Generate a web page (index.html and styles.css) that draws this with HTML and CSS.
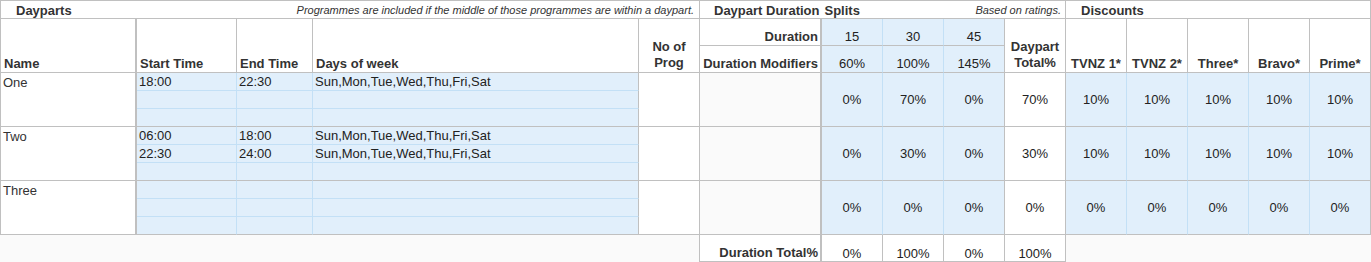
FILE: index.html
```html
<!DOCTYPE html>
<html>
<head>
<meta charset="utf-8">
<link rel="stylesheet" href="styles.css">
</head>
<body>
<div class="sheet">
  <!-- title row -->
  <div class="c top first title t-dp"><span class="ttl">Dayparts</span><span class="note">Programmes are included if the middle of those programmes are within a daypart.</span></div>
  <div class="c top title t-dur"><span class="ttl">Daypart Duration<span class="gap">Splits</span></span><span class="note">Based on ratings.</span></div>
  <div class="c top title t-disc"><span class="ttl">Discounts</span></div>

  <!-- header rows -->
  <div class="c first thick hd r2">Name</div>
  <div class="c hd r2">Start Time</div>
  <div class="c hd r2">End Time</div>
  <div class="c hd r2">Days of week</div>
  <div class="c hd r2 mid two">No of<br>Prog</div>
  <div class="c hd right thick">Duration</div>
  <div class="c blue br-lb mid hv">15</div>
  <div class="c blue br-lb mid hv">30</div>
  <div class="c blue mid hv">45</div>
  <div class="c hd r2 mid two">Daypart<br>Total%</div>
  <div class="c hd r2 mid">TVNZ 1*</div>
  <div class="c hd r2 mid">TVNZ 2*</div>
  <div class="c hd r2 mid">Three*</div>
  <div class="c hd r2 mid">Bravo*</div>
  <div class="c hd r2 mid">Prime*</div>
  <div class="c hd right thick">Duration Modifiers</div>
  <div class="c blue br-lb mid hv">60%</div>
  <div class="c blue br-lb mid hv">100%</div>
  <div class="c blue mid hv">145%</div>

  <!-- daypart One -->
  <div class="c first thick r3 name">One</div>
  <div class="c blue br-lb bb-lb tx">18:00</div>
  <div class="c blue br-lb bb-lb tx">22:30</div>
  <div class="c blue bb-lb tx">Sun,Mon,Tue,Wed,Thu,Fri,Sat</div>
  <div class="c r3"></div>
  <div class="c r3 thick grey"></div>
  <div class="c r3 blue br-lb val">0%</div>
  <div class="c r3 blue br-lb val">70%</div>
  <div class="c r3 blue val">0%</div>
  <div class="c r3 val">70%</div>
  <div class="c r3 blue br-lb val">10%</div>
  <div class="c r3 blue br-lb val">10%</div>
  <div class="c r3 blue br-lb val">10%</div>
  <div class="c r3 blue br-lb val">10%</div>
  <div class="c r3 blue val">10%</div>
  <div class="c blue br-lb bb-lb tx"></div>
  <div class="c blue br-lb bb-lb tx"></div>
  <div class="c blue bb-lb tx"></div>
  <div class="c blue br-lb tx"></div>
  <div class="c blue br-lb tx"></div>
  <div class="c blue tx"></div>

  <!-- daypart Two -->
  <div class="c first thick r3 name">Two</div>
  <div class="c blue br-lb bb-lb tx">06:00</div>
  <div class="c blue br-lb bb-lb tx">18:00</div>
  <div class="c blue bb-lb tx">Sun,Mon,Tue,Wed,Thu,Fri,Sat</div>
  <div class="c r3"></div>
  <div class="c r3 thick grey"></div>
  <div class="c r3 blue br-lb val">0%</div>
  <div class="c r3 blue br-lb val">30%</div>
  <div class="c r3 blue val">0%</div>
  <div class="c r3 val">30%</div>
  <div class="c r3 blue br-lb val">10%</div>
  <div class="c r3 blue br-lb val">10%</div>
  <div class="c r3 blue br-lb val">10%</div>
  <div class="c r3 blue br-lb val">10%</div>
  <div class="c r3 blue val">10%</div>
  <div class="c blue br-lb bb-lb tx">22:30</div>
  <div class="c blue br-lb bb-lb tx">24:00</div>
  <div class="c blue bb-lb tx">Sun,Mon,Tue,Wed,Thu,Fri,Sat</div>
  <div class="c blue br-lb tx"></div>
  <div class="c blue br-lb tx"></div>
  <div class="c blue tx"></div>

  <!-- daypart Three -->
  <div class="c first thick r3 name">Three</div>
  <div class="c blue br-lb bb-lb tx"></div>
  <div class="c blue br-lb bb-lb tx"></div>
  <div class="c blue bb-lb tx"></div>
  <div class="c r3"></div>
  <div class="c r3 thick grey"></div>
  <div class="c r3 blue br-lb val">0%</div>
  <div class="c r3 blue br-lb val">0%</div>
  <div class="c r3 blue val">0%</div>
  <div class="c r3 val">0%</div>
  <div class="c r3 blue br-lb val">0%</div>
  <div class="c r3 blue br-lb val">0%</div>
  <div class="c r3 blue br-lb val">0%</div>
  <div class="c r3 blue br-lb val">0%</div>
  <div class="c r3 blue val">0%</div>
  <div class="c blue br-lb bb-lb tx"></div>
  <div class="c blue br-lb bb-lb tx"></div>
  <div class="c blue bb-lb tx"></div>
  <div class="c blue br-lb tx"></div>
  <div class="c blue br-lb tx"></div>
  <div class="c blue tx"></div>

  <!-- totals row -->
  <div class="c spacer-l"></div>
  <div class="c hd right thick tot">Duration Total%</div>
  <div class="c tv">0%</div>
  <div class="c tv">100%</div>
  <div class="c tv">0%</div>
  <div class="c tv">100%</div>
  <div class="c spacer-r"></div>
</div>
</body>
</html>
```

FILE: styles.css
```css
html, body {
  margin: 0;
  padding: 0;
  background: #fafafa;
}

body {
  font-family: "Liberation Sans", Arial, sans-serif;
  font-size: 13px;
  color: #222;
}

.sheet {
  display: grid;
  grid-template-columns: 137px 100px 76px 326px 61px 122px repeat(9, 61px);
  grid-template-rows: 19px 27px 27px repeat(9, 18px) 27px;
  width: 1371px;
}

.c {
  box-sizing: border-box;
  border-right: 1px solid #c0c0c0;
  border-bottom: 1px solid #c0c0c0;
  background: #fff;
  display: flex;
  white-space: nowrap;
  overflow: hidden;
  line-height: 15px;
}

.top { border-top: 1px solid #c0c0c0; }
.first { border-left: 1px solid #c0c0c0; }
.thick { border-right-width: 2px; }

.blue { background: #e1effb; }
.grey { background: #fafafa; }
.br-lb { border-right-color: #c3e0f6; }
.bb-lb { border-bottom-color: #c3e0f6; }

.r2 { grid-row: span 2; }
.r3 { grid-row: span 3; }

/* title row */
.title {
  grid-column: span 5;
  align-items: center;
  justify-content: space-between;
  padding-top: 2px;
}
.t-dp { padding-left: 15px; padding-right: 5px; }
.t-dur { padding-left: 14px; padding-right: 4px; }
.t-disc { padding-left: 15px; }

.ttl {
  font-weight: bold;
  color: #333;
}
.gap { margin-left: 5px; }

.note {
  font-style: italic;
  font-size: 11px;
  color: #333;
}

/* headers */
.hd {
  font-weight: bold;
  color: #333;
  align-items: flex-end;
  padding: 0 3px 1px;
}
.hd.right {
  justify-content: flex-end;
  padding: 0 2px 1px 0;
}
.mid {
  justify-content: center;
  text-align: center;
}
.two {
  line-height: 16px;
  padding-bottom: 1px;
}
.hv {
  align-items: flex-end;
  padding-bottom: 1px;
  color: #222;
}

/* body */
.name {
  padding: 2px 2px 0;
  align-items: flex-start;
  color: #333;
}
.tx {
  align-items: center;
  padding: 1px 2px 0;
  line-height: 16px;
}
.val {
  align-items: center;
  justify-content: center;
}

/* totals */
.tv {
  align-items: flex-end;
  justify-content: center;
  padding-bottom: 0;
}
.tot { padding-bottom: 0; }
.spacer-l {
  grid-column: span 5;
  border-bottom: none;
  background: #fafafa;
}
.spacer-r {
  grid-column: span 5;
  border: none;
  background: #fafafa;
}
```
